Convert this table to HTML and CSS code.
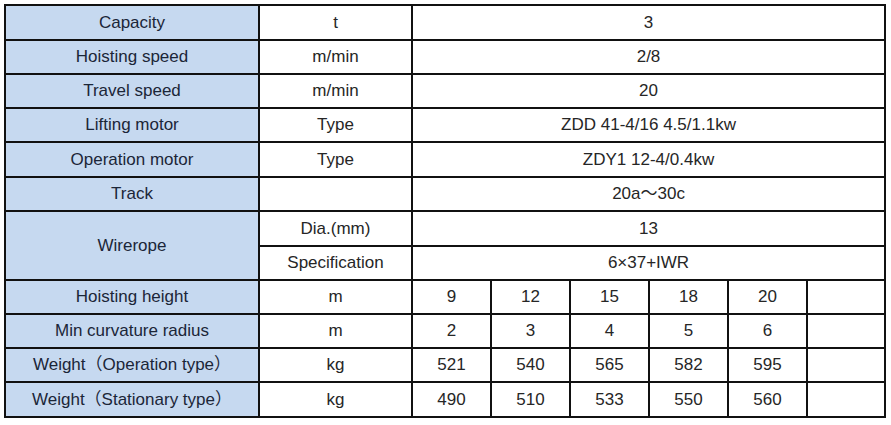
FILE: index.html
```html
<!DOCTYPE html>
<html>
<head>
<meta charset="utf-8">
<link rel="stylesheet" href="styles.css">
</head>
<body>
<table class="spec">
  <colgroup>
    <col class="c-name">
    <col class="c-unit">
    <col class="c-val"><col class="c-val"><col class="c-val"><col class="c-val"><col class="c-val">
    <col class="c-last">
  </colgroup>
  <tbody>
    <tr class="r35"><td class="lbl">Capacity</td><td>t</td><td colspan="6">3</td></tr>
    <tr class="r34"><td class="lbl">Hoisting speed</td><td>m/min</td><td colspan="6">2/8</td></tr>
    <tr class="r34"><td class="lbl">Travel speed</td><td>m/min</td><td colspan="6">20</td></tr>
    <tr class="r34"><td class="lbl">Lifting motor</td><td>Type</td><td colspan="6">ZDD 41-4/16 4.5/1.1kw</td></tr>
    <tr class="r35"><td class="lbl">Operation motor</td><td>Type</td><td colspan="6">ZDY1 12-4/0.4kw</td></tr>
    <tr class="r34"><td class="lbl">Track</td><td></td><td colspan="6">20a～30c</td></tr>
    <tr class="r35"><td class="lbl" rowspan="2">Wirerope</td><td>Dia.(mm)</td><td colspan="6">13</td></tr>
    <tr class="r34"><td>Specification</td><td colspan="6">6×37+IWR</td></tr>
    <tr class="r34"><td class="lbl">Hoisting height</td><td>m</td><td>9</td><td>12</td><td>15</td><td>18</td><td>20</td><td></td></tr>
    <tr class="r34"><td class="lbl">Min curvature radius</td><td>m</td><td>2</td><td>3</td><td>4</td><td>5</td><td>6</td><td></td></tr>
    <tr class="r34"><td class="lbl">Weight（Operation type）</td><td>kg</td><td>521</td><td>540</td><td>565</td><td>582</td><td>595</td><td></td></tr>
    <tr class="r35"><td class="lbl">Weight（Stationary type）</td><td>kg</td><td>490</td><td>510</td><td>533</td><td>550</td><td>560</td><td></td></tr>
  </tbody>
</table>
</body>
</html>
```
FILE: styles.css
```css
html, body {
  margin: 0;
  padding: 0;
  background: #ffffff;
}
body {
  padding: 4px 0 0 4px;
}
.spec {
  border-collapse: collapse;
  table-layout: fixed;
  width: 882px;
  font-family: "Liberation Sans", Arial, "Noto Sans CJK SC", sans-serif;
  font-size: 17px;
  line-height: 20px;
  color: #262626;
}
.c-name { width: 254px; }
.c-unit { width: 153px; }
.c-val { width: 79px; }
.c-last { width: 78px; }
.spec td {
  border: 2px solid #111111;
  padding: 0;
  text-align: center;
  vertical-align: middle;
  white-space: nowrap;
  overflow: hidden;
  background: #ffffff;
}
.spec td.lbl {
  background: #c6d9f0;
  color: #1b2638;
}
.r34 { height: 34px; }
.r35 { height: 35px; }
```
